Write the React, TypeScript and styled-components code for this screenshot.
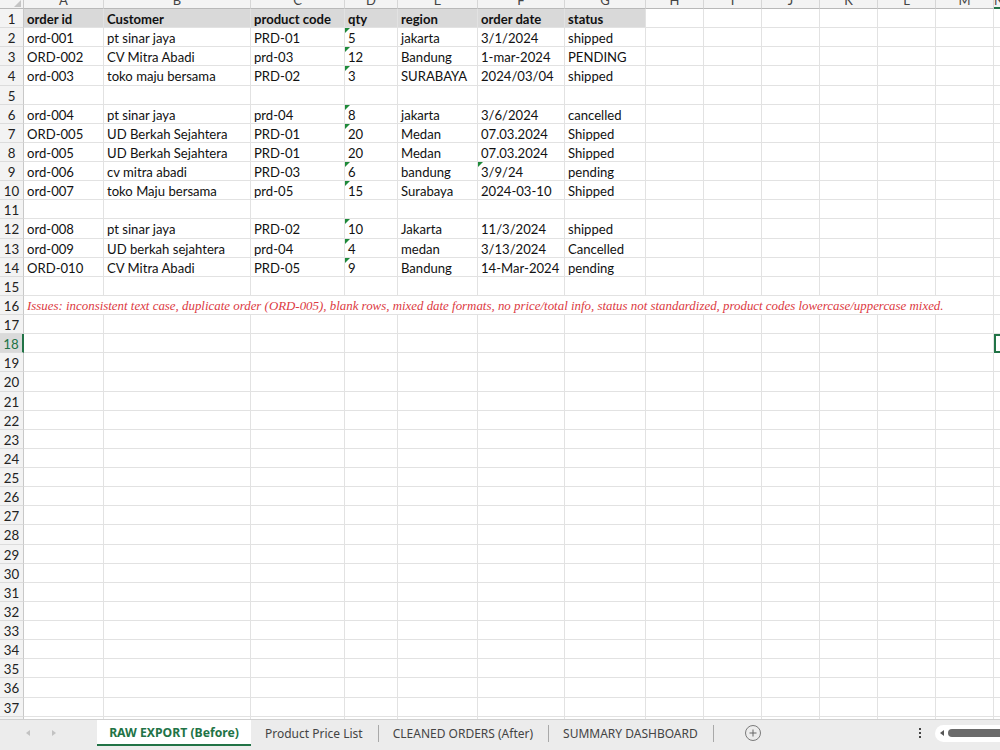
import React from 'react';
import styled, { createGlobalStyle, css } from 'styled-components';

const GlobalStyle = createGlobalStyle`
  html, body {
    margin: 0;
    padding: 0;
    background: #fff;
    overflow: hidden;
  }
  #root {
    width: 1000px;
    height: 750px;
  }
`;

const GREEN = '#217346';
const LETTERS = ['A', 'B', 'C', 'D', 'E', 'F', 'G', 'H', 'I', 'J', 'K', 'L', 'M', 'N'];
const ROW_COUNT = 38;

const DATA: Record<number, string[]> = {
  1: ['order id', 'Customer', 'product code', 'qty', 'region', 'order date', 'status'],
  2: ['ord-001', 'pt sinar jaya', 'PRD-01', '5', 'jakarta', '3/1/2024', 'shipped'],
  3: ['ORD-002', 'CV Mitra Abadi', 'prd-03', '12', 'Bandung', '1-mar-2024', 'PENDING'],
  4: ['ord-003', 'toko maju bersama', 'PRD-02', '3', 'SURABAYA', '2024/03/04', 'shipped'],
  6: ['ord-004', 'pt sinar jaya', 'prd-04', '8', 'jakarta', '3/6/2024', 'cancelled'],
  7: ['ORD-005', 'UD Berkah Sejahtera', 'PRD-01', '20', 'Medan', '07.03.2024', 'Shipped'],
  8: ['ord-005', 'UD Berkah Sejahtera', 'PRD-01', '20', 'Medan', '07.03.2024', 'Shipped'],
  9: ['ord-006', 'cv mitra abadi', 'PRD-03', '6', 'bandung', '3/9/24', 'pending'],
  10: ['ord-007', 'toko Maju bersama', 'prd-05', '15', 'Surabaya', '2024-03-10', 'Shipped'],
  12: ['ord-008', 'pt sinar jaya', 'PRD-02', '10', 'Jakarta', '11/3/2024', 'shipped'],
  13: ['ord-009', 'UD berkah sejahtera', 'prd-04', '4', 'medan', '3/13/2024', 'Cancelled'],
  14: ['ORD-010', 'CV Mitra Abadi', 'PRD-05', '9', 'Bandung', '14-Mar-2024', 'pending'],
};

// cells holding numbers stored as text (green corner marker)
const FLAGGED = new Set(['2-3', '3-3', '4-3', '6-3', '7-3', '9-3', '9-5', '10-3', '12-3', '13-3', '14-3']);

const ISSUES =
  'Issues: inconsistent text case, duplicate order (ORD-005), blank rows, mixed date formats, no price/total info, status not standardized, product codes lowercase/uppercase mixed.';

const SELECTED_ROW = 18;

const Page = styled.div`
  width: 1000px;
  height: 750px;
  display: flex;
  flex-direction: column;
  overflow: hidden;
  font-family: Lato, 'Liberation Sans', sans-serif;
`;

const Sheet = styled.div`
  height: 719px;
  flex: none;
  overflow: hidden;
  display: grid;
  grid-template-columns: 24px 80px 147px 94px 53px 80px 87px 81px 58px 58px 58px 58px 58px 58px 1fr;
  grid-template-rows: 9px repeat(${ROW_COUNT}, 19.125px);
`;

const Corner = styled.div`
  position: relative;
  background: #f3f3f3;
  border-right: 1px solid #c8c8c8;
  border-bottom: 1px solid #b8b8b8;
  box-sizing: border-box;

  &::after {
    content: '';
    position: absolute;
    right: 2px;
    bottom: 1px;
    border-left: 7px solid transparent;
    border-bottom: 7px solid #c4c4c4;
  }
`;

const ColHead = styled.div<{ $active?: boolean }>`
  box-sizing: border-box;
  background: #f3f3f3;
  border-right: 1px solid #d6d6d6;
  border-bottom: 1px solid #b8b8b8;
  overflow: hidden;
  text-align: center;
  font-size: 13px;
  line-height: 13px;
  color: #444;

  span {
    display: block;
    margin-top: -6px;
  }

  ${(p) =>
    p.$active &&
    css`
      border-bottom: 2px solid ${GREEN};
    `}
`;

const RowNum = styled.div<{ $active?: boolean }>`
  box-sizing: border-box;
  background: #f3f3f3;
  border-right: 1px solid #c8c8c8;
  border-bottom: 1px solid #dcdcdc;
  display: flex;
  align-items: center;
  justify-content: center;
  padding-top: 2px;
  font-size: 13.3px;
  color: #222;

  ${(p) =>
    p.$active &&
    css`
      background: #dadada;
      color: ${GREEN};
      border-right: 2px solid ${GREEN};
    `}
`;

const Cell = styled.div<{ $head?: boolean; $flag?: boolean; $selected?: boolean }>`
  position: relative;
  box-sizing: border-box;
  border-right: 1px solid #e2e2e2;
  border-bottom: 1px solid #e2e2e2;
  padding: 2px 3px 0;
  display: flex;
  align-items: center;
  white-space: nowrap;
  overflow: hidden;
  font-size: 13.1px;
  color: #111;

  ${(p) =>
    p.$head &&
    css`
      background: #d9d9d9;
      font-weight: 700;
    `}

  ${(p) =>
    p.$flag &&
    css`
      &::before {
        content: '';
        position: absolute;
        left: 0;
        top: 0;
        border-top: 5px solid #1e8a3a;
        border-right: 5px solid transparent;
      }
    `}

  ${(p) =>
    p.$selected &&
    css`
      border: 2px solid ${GREEN};
      border-right: 0;
    `}
`;

const IssueCell = styled.div`
  grid-column: 2 / 15;
  box-sizing: border-box;
  border-right: 1px solid #e2e2e2;
  border-bottom: 1px solid #e2e2e2;
  padding: 3px 3px 0;
  display: flex;
  align-items: center;
  white-space: nowrap;
  overflow: hidden;
  font-family: 'Liberation Serif', serif;
  font-style: italic;
  font-size: 12.9px;
  color: #dc3a3f;
`;

const TabBar = styled.div`
  flex: 1;
  display: flex;
  align-items: stretch;
  box-sizing: border-box;
  background: #ececec;
  border-top: 1px solid #d0d0d0;
  padding-bottom: 4px;
  font-family: 'Noto Sans', 'Open Sans', sans-serif;
  font-size: 12px;
  color: #444;
`;

const Nav = styled.div`
  width: 97px;
  flex: none;
  display: flex;
  align-items: center;
  padding-left: 26px;
  gap: 22px;
  box-sizing: border-box;
`;

const Arrow = styled.span<{ $dir: 'left' | 'right'; $dark?: boolean }>`
  width: 0;
  height: 0;
  border-top: 3px solid transparent;
  border-bottom: 3px solid transparent;
  ${(p) =>
    p.$dir === 'left'
      ? css`
          border-right: 4px solid ${p.$dark ? '#555' : '#c2c2c2'};
        `
      : css`
          border-left: 4px solid #c2c2c2;
        `}
`;

const Tab = styled.div<{ $active?: boolean }>`
  display: flex;
  align-items: center;
  padding: 0 15px 0 14px;
  white-space: nowrap;

  ${(p) =>
    p.$active &&
    css`
      width: 154px;
      box-sizing: border-box;
      justify-content: center;
      background: #fff;
      color: ${GREEN};
      font-weight: 700;
      font-size: 12.2px;
      padding: 0;
      border-bottom: 2px solid ${GREEN};
    `}
`;

const Sep = styled.div`
  width: 1px;
  height: 17px;
  align-self: center;
  background: #a9a9a9;
`;

const AddButton = styled.div`
  margin-left: 31px;
  align-self: center;
  width: 14px;
  height: 14px;
  border: 1px solid #7a7a7a;
  border-radius: 50%;
  display: flex;
  align-items: center;
  justify-content: center;
`;

const Spacer = styled.div`
  flex: 1;
`;

const More = styled.div`
  align-self: center;
  display: flex;
  flex-direction: column;
  gap: 2px;
  margin-right: 14px;

  i {
    width: 2px;
    height: 2px;
    background: #444;
  }
`;

const Scroll = styled.div`
  align-self: center;
  width: 65px;
  height: 17px;
  background: #fff;
  border-radius: 9px 0 0 9px;
  display: flex;
  align-items: center;
  padding-left: 5px;
  box-sizing: border-box;
  gap: 4px;
`;

const Thumb = styled.div`
  flex: 1;
  height: 8px;
  background: #6b6b6b;
  border-radius: 4px 0 0 4px;
`;

function buildRows() {
  const out: React.ReactNode[] = [];
  for (let r = 1; r <= ROW_COUNT; r++) {
    const active = r === SELECTED_ROW;
    out.push(
      <RowNum key={`n${r}`} $active={active}>
        {r}
      </RowNum>,
    );
    if (r === 16) {
      out.push(<IssueCell key="issues">{ISSUES}</IssueCell>);
      out.push(<Cell key="16-13" />);
      continue;
    }
    const values = DATA[r] || [];
    for (let c = 0; c < 14; c++) {
      out.push(
        <Cell
          key={`${r}-${c}`}
          $head={r === 1 && c < 7}
          $flag={FLAGGED.has(`${r}-${c}`)}
          $selected={active && c === 13}
        >
          {values[c] || ''}
        </Cell>,
      );
    }
  }
  return out;
}

export default function App() {
  return (
    <>
      <GlobalStyle />
      <Page>
        <Sheet>
          <Corner />
          {LETTERS.map((l) => (
            <ColHead key={l} $active={l === 'N'}>
              <span>{l}</span>
            </ColHead>
          ))}
          {buildRows()}
        </Sheet>

        <TabBar>
          <Nav>
            <Arrow $dir="left" />
            <Arrow $dir="right" />
          </Nav>
          <Tab $active>RAW EXPORT (Before)</Tab>
          <Tab>Product Price List</Tab>
          <Sep />
          <Tab>CLEANED ORDERS (After)</Tab>
          <Sep />
          <Tab>SUMMARY DASHBOARD</Tab>
          <Sep />
          <AddButton>
            <svg width="8" height="8" viewBox="0 0 8 8">
              <path d="M4 0.5v7M0.5 4h7" stroke="#666" strokeWidth="1" />
            </svg>
          </AddButton>
          <Spacer />
          <More>
            <i />
            <i />
            <i />
          </More>
          <Scroll>
            <Arrow $dir="left" $dark />
            <Thumb />
          </Scroll>
        </TabBar>
      </Page>
    </>
  );
}
